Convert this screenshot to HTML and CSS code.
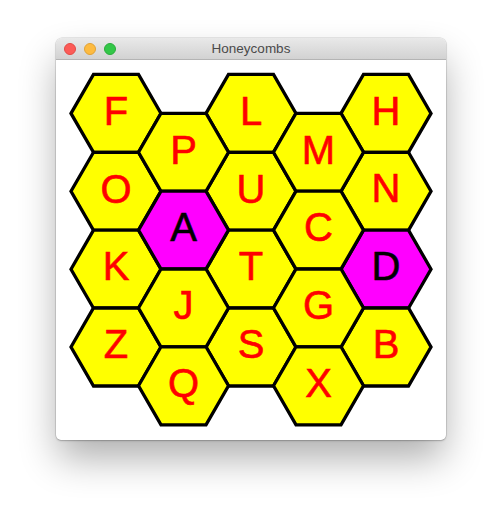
FILE: index.html
```html
<!DOCTYPE html>
<html lang="en">
<head>
<meta charset="utf-8">
<title>Honeycombs</title>
<link rel="stylesheet" href="styles.css">
</head>
<body>
<div class="window">
  <div class="titlebar">
    <div class="lights">
      <span class="light close"></span>
      <span class="light minimize"></span>
      <span class="light zoom"></span>
    </div>
    <div class="title">Honeycombs</div>
  </div>
  <svg class="board" width="390" height="380" viewBox="0 0 390 380">
    <defs>
      <polygon id="hex" points="-45,0 -22.5,-39 22.5,-39 45,0 22.5,39 -22.5,39"/>
    </defs>
    <g class="cell"><use href="#hex" x="60" y="53.4"/><text x="60" y="65">F</text></g>
    <g class="cell"><use href="#hex" x="60" y="131.3"/><text x="60" y="142.5">O</text></g>
    <g class="cell"><use href="#hex" x="60" y="209.2"/><text x="60" y="220">K</text></g>
    <g class="cell"><use href="#hex" x="60" y="287"/><text x="60" y="298">Z</text></g>
    <g class="cell"><use href="#hex" x="195" y="53.4"/><text x="195" y="65">L</text></g>
    <g class="cell"><use href="#hex" x="195" y="131.3"/><text x="195" y="142.5">U</text></g>
    <g class="cell"><use href="#hex" x="195" y="209.2"/><text x="195" y="220">T</text></g>
    <g class="cell"><use href="#hex" x="195" y="287"/><text x="195" y="298">S</text></g>
    <g class="cell"><use href="#hex" x="330" y="53.4"/><text x="330" y="65">H</text></g>
    <g class="cell"><use href="#hex" x="330" y="131.3"/><text x="330" y="142">N</text></g>
    <g class="cell active"><use href="#hex" x="330" y="209.2"/><text x="330" y="219.5">D</text></g>
    <g class="cell"><use href="#hex" x="330" y="287"/><text x="330" y="298">B</text></g>
    <g class="cell"><use href="#hex" x="127.5" y="92.3"/><text x="127.5" y="103.5">P</text></g>
    <g class="cell active"><use href="#hex" x="127.5" y="170.1"/><text x="127.5" y="181">A</text></g>
    <g class="cell"><use href="#hex" x="127.5" y="248"/><text x="127.5" y="258.5">J</text></g>
    <g class="cell"><use href="#hex" x="127.5" y="325.8"/><text x="127.5" y="336.5">Q</text></g>
    <g class="cell"><use href="#hex" x="262.5" y="92.3"/><text x="262.5" y="103.5">M</text></g>
    <g class="cell"><use href="#hex" x="262.5" y="170.1"/><text x="262.5" y="180.5">C</text></g>
    <g class="cell"><use href="#hex" x="262.5" y="248"/><text x="262.5" y="258.5">G</text></g>
    <g class="cell"><use href="#hex" x="262.5" y="325.8"/><text x="262.5" y="336.5">X</text></g>
  </svg>
</div>
</body>
</html>
```
FILE: styles.css
```css
html, body {
  margin: 0;
  padding: 0;
  background: #fff;
  height: 514px;
  overflow: hidden;
}

body {
  padding: 38px 56px 0;
  box-sizing: border-box;
}

.window {
  width: 390px;
  height: 402px;
  border-radius: 6px 6px 5px 5px;
  background: #fff;
  overflow: hidden;
  box-shadow: 0 0 0 0.5px rgba(0, 0, 0, 0.16), 0 1px 2px rgba(0, 0, 0, 0.2), 0 20px 38px -2px rgba(0, 0, 0, 0.32);
}

.titlebar {
  position: relative;
  height: 22px;
  box-sizing: border-box;
  display: flex;
  align-items: center;
  justify-content: center;
  background: linear-gradient(#e9e9e9, #d2d2d2);
  border-bottom: 1px solid #b4b4b4;
}

.lights {
  position: absolute;
  left: 8px;
  top: 5px;
  display: flex;
  gap: 8px;
}

.light {
  width: 12px;
  height: 12px;
  border-radius: 50%;
  box-sizing: border-box;
}

.close { background: #fc5b57; border: 0.5px solid #e24b45; }
.minimize { background: #fdbb40; border: 0.5px solid #e0a236; }
.zoom { background: #33c748; border: 0.5px solid #2aac3b; }

.title {
  font: 13.5px "Liberation Sans", Arial, sans-serif;
  color: #4a4a4a;
}

.board {
  display: block;
}

.cell use {
  fill: #ff0;
  stroke: #000;
  stroke-width: 3.3px;
}

.cell text {
  font: 40px "Liberation Sans", Arial, sans-serif;
  fill: #f00;
  stroke: #f00;
  stroke-width: 0.6px;
  text-anchor: middle;
}

.cell.active use {
  fill: #f0f;
}

.cell.active text {
  fill: #000;
  stroke: #000;
}
```
